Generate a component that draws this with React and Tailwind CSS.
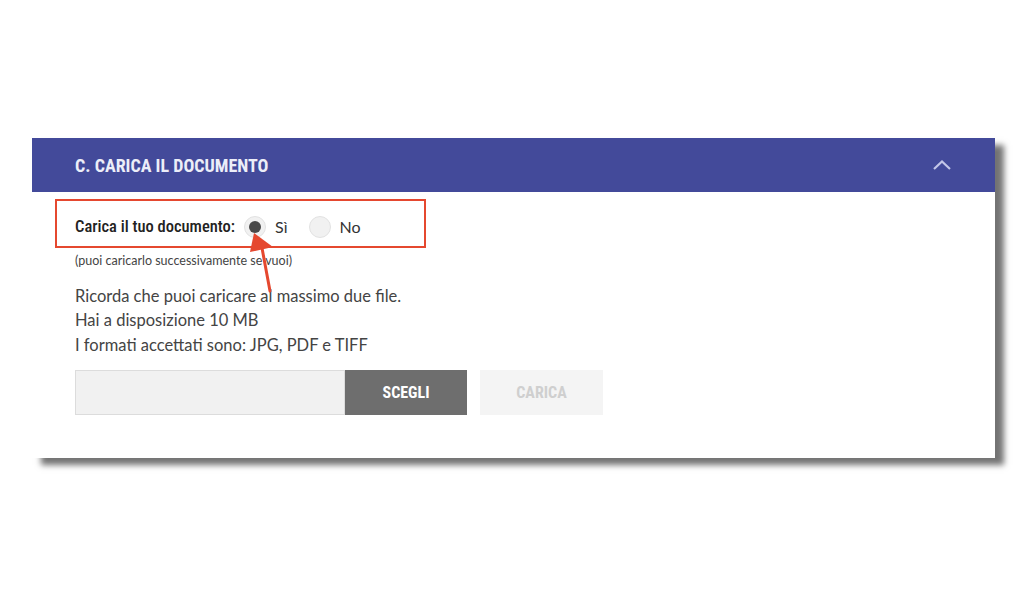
import React, { useState } from "react";

const condensed = { fontFamily: '"Roboto Condensed", "Liberation Sans Narrow", "DejaVu Sans Condensed", Roboto, sans-serif' };

const Radio = ({ checked, label, onClick }) => (
  <button onClick={onClick} className="flex items-center gap-[9px]">
    <span className="w-[22px] h-[22px] rounded-full bg-[#f1f1f1] border border-[#e2e2e2] flex items-center justify-center">
      {checked && <span className="w-[12px] h-[12px] rounded-full bg-[#4a4a4a]" />}
    </span>
    <span className="text-[16px] text-[#333]" style={{ fontFamily: "Lato, sans-serif" }}>{label}</span>
  </button>
);

export default function App() {
  const [upload, setUpload] = useState(true);

  return (
    <div className="relative w-[1024px] h-[595px] bg-white pt-[138px] pl-[32px]" style={{ fontFamily: "Lato, sans-serif" }}>
      <div className="w-[963px] h-[320px] bg-white shadow-[9px_7px_6px_rgba(0,0,0,0.55)]">
        <div className="h-[54px] bg-[#434a9a] flex items-center justify-between pl-[43px] pr-[44px]">
          <h2 className="text-[18px] font-bold text-[#eceef8]" style={condensed}>
            C. CARICA IL DOCUMENTO
          </h2>
          <svg width="18" height="10" viewBox="0 0 18 10" fill="none">
            <polyline points="1,9 9,1.5 17,9" stroke="#c3c6e8" strokeWidth="2.2" strokeLinejoin="miter" />
          </svg>
        </div>

        <div className="pl-[43px] pt-[7px]">
          <div className="-ml-[20px] w-[371px] h-[49px] border-2 border-[#e5482f] flex items-center pl-[18px] pt-[7px] gap-[9px]">
            <span className="text-[16.5px] font-medium text-[#222]" style={condensed}>Carica il tuo documento:</span>
            <div className="flex items-center gap-[21px]">
              <Radio checked={upload} label="Sì" onClick={() => setUpload(true)} />
              <Radio checked={!upload} label="No" onClick={() => setUpload(false)} />
            </div>
          </div>
          <p className="mt-[4px] text-[12.5px] text-[#444]">(puoi caricarlo successivamente se vuoi)</p>

          <div className="mt-[13px] text-[16.5px] leading-[24.5px] text-[#444]">
            <p>Ricorda che puoi caricare al massimo due file.</p>
            <p>Hai a disposizione 10 MB</p>
            <p>I formati accettati sono: JPG, PDF e TIFF</p>
          </div>

          <div className="mt-[13px] flex items-center">
            <div className="w-[270px] h-[45px] bg-[#f1f1f1] border border-[#dcdcdc]" />
            <button className="w-[122px] h-[45px] bg-[#6e6e6e] text-white text-[16px] font-bold" style={condensed}>
              SCEGLI
            </button>
            <button className="ml-[13px] w-[123px] h-[45px] bg-[#f4f4f4] text-[#cfcfcf] text-[16px] font-bold" style={condensed}>
              CARICA
            </button>
          </div>
        </div>
      </div>

      <svg className="absolute left-0 top-0 pointer-events-none" width="1024" height="595">
        <line x1="262" y1="248" x2="270" y2="291" stroke="#e5482f" strokeWidth="3" strokeLinecap="round" />
        <polygon points="254,233 250,252 273,247" fill="#e5482f" />
      </svg>
    </div>
  );
}
